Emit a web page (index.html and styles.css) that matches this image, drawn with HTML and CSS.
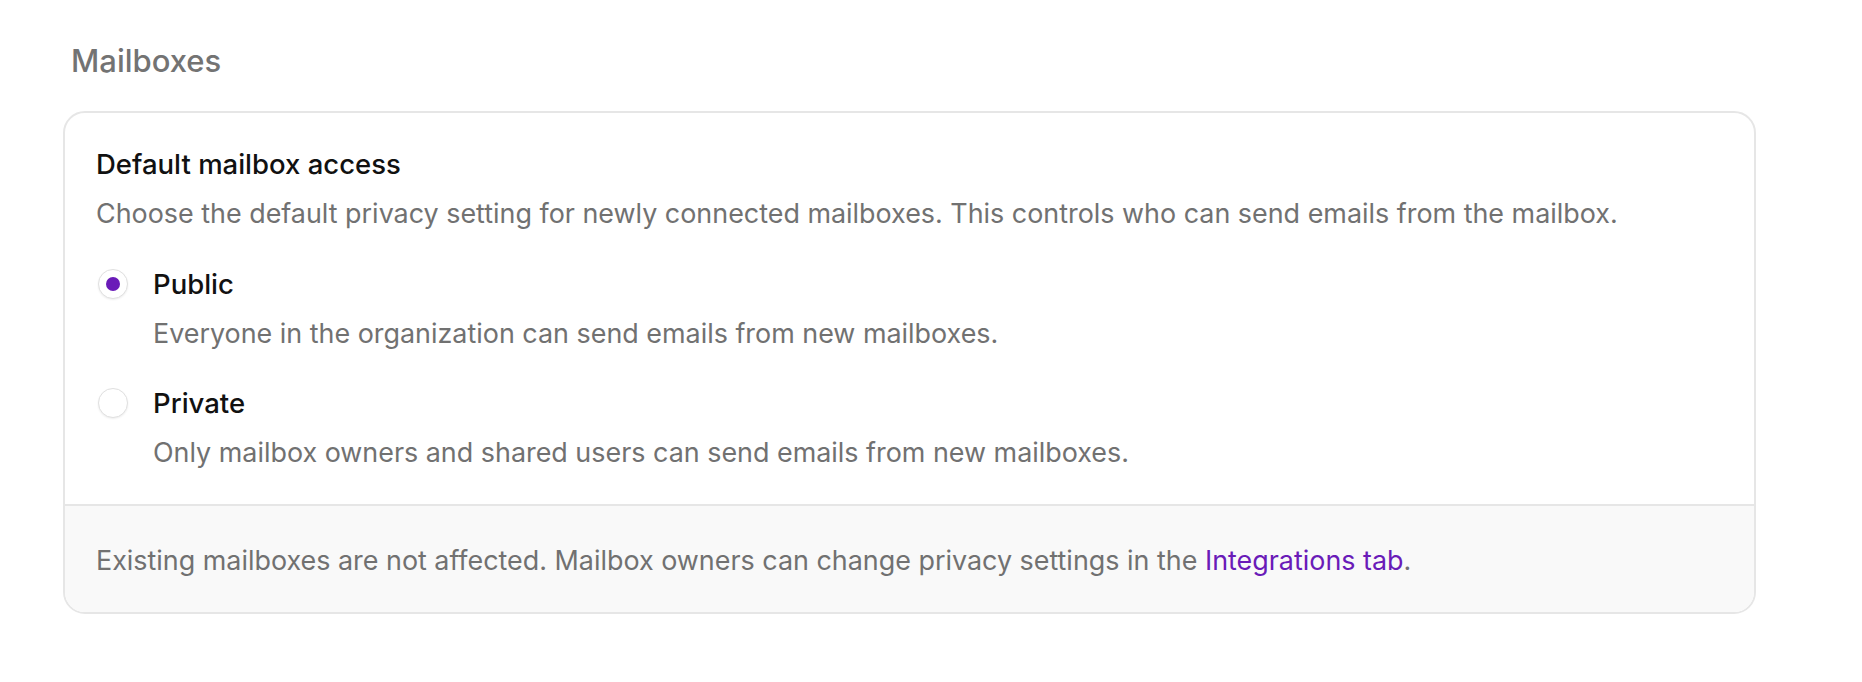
FILE: index.html
```html
<!DOCTYPE html>
<html lang="en">
<head>
<meta charset="utf-8">
<title>Mailboxes</title>
<link rel="stylesheet" href="styles.css">
</head>
<body>
<main class="page">
  <h2 class="section-title">Mailboxes</h2>
  <section class="card">
    <div class="card-body">
      <h3 class="card-heading">Default mailbox access</h3>
      <p class="card-desc">Choose the default privacy setting for newly connected mailboxes. This controls who can send emails from the mailbox.</p>
      <div class="options">
        <label class="option">
          <span class="radio radio-checked"><span class="radio-dot"></span></span>
          <span class="option-text">
            <span class="option-label">Public</span>
            <span class="option-help">Everyone in the organization can send emails from new mailboxes.</span>
          </span>
        </label>
        <label class="option">
          <span class="radio"></span>
          <span class="option-text">
            <span class="option-label">Private</span>
            <span class="option-help">Only mailbox owners and shared users can send emails from new mailboxes.</span>
          </span>
        </label>
      </div>
    </div>
    <div class="card-footer">
      Existing mailboxes are not affected. Mailbox owners can change privacy settings in the <a class="link" href="#">Integrations tab</a>.
    </div>
  </section>
</main>
</body>
</html>
```

FILE: styles.css
```css
* { box-sizing: border-box; }

html, body {
  margin: 0;
  padding: 0;
  background: #ffffff;
}

body {
  font-family: "Inter", "Liberation Sans", sans-serif;
  font-size: 26.9px;
  line-height: 36px;
  color: #717171;
  -webkit-font-smoothing: antialiased;
}

.page {
  padding: 43px 106px 0 63px;
}

.section-title {
  margin: 0 0 32px 0;
  padding-left: 8px;
  font-size: 31px;
  line-height: 36px;
  font-weight: 500;
  color: #737373;
}

.card {
  width: 1693px;
  border: 2px solid #e6e6e6;
  border-radius: 22px;
  overflow: hidden;
  background: #ffffff;
}

.card-body {
  padding: 33px 32px 34px 31px;
}

.card-heading {
  margin: 0;
  font-size: 27.5px;
  line-height: 36px;
  font-weight: 500;
  color: #111111;
}

.card-desc {
  margin: 13px 0 0 0;
}

.options {
  margin-top: 35px;
  display: flex;
  flex-direction: column;
  gap: 34px;
}

.option {
  display: flex;
  align-items: flex-start;
  gap: 25px;
  cursor: pointer;
}

.radio {
  flex: none;
  width: 30px;
  height: 30px;
  margin: 3px 0 0 2px;
  border-radius: 50%;
  border: 1.5px solid #e0e0e0;
  background: #ffffff;
  box-shadow: 0 1px 2px rgba(0, 0, 0, 0.07);
  display: flex;
  align-items: center;
  justify-content: center;
}

.radio-dot {
  width: 14px;
  height: 14px;
  border-radius: 50%;
  background: #6a1bb8;
}

.option-text {
  display: flex;
  flex-direction: column;
  gap: 13px;
}

.option-label {
  color: #111111;
  font-size: 27.5px;
  font-weight: 500;
}

.card-footer {
  border-top: 2px solid #e6e6e6;
  background: #f9f9f9;
  padding: 36px 31px 34px 31px;
}

.link {
  color: #6a1bb8;
  text-decoration: none;
}
```
